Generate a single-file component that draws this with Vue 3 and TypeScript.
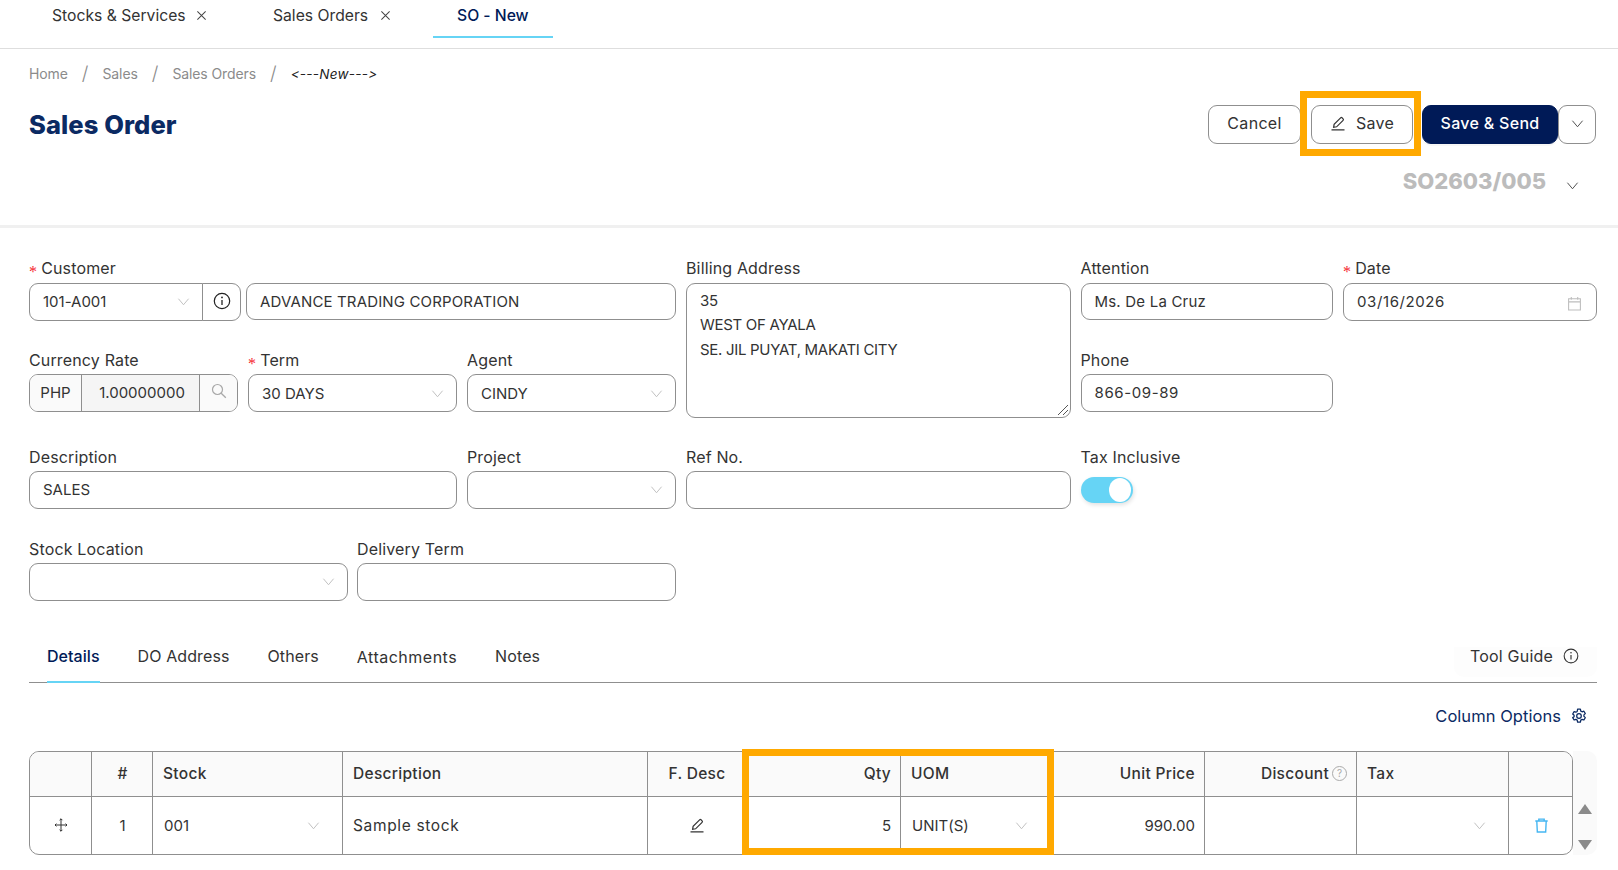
<script setup lang="ts">
interface Crumb { label: string }
const crumbs: Crumb[] = [{ label: 'Home' }, { label: 'Sales' }, { label: 'Sales Orders' }]
const sections: string[] = ['Details', 'DO Address', 'Others', 'Attachments', 'Notes']
const widths: number[] = [62, 61, 190, 305, 98, 155, 150, 154, 152, 152, 63]
</script>

<template>
  <div class="page">
    <svg class="sprite" width="0" height="0" aria-hidden="true">
      <symbol id="chev" viewBox="0 0 14 14"><path d="M1.5 4 7 10.5 12.5 4" fill="none" stroke="currentColor" stroke-width="1" /></symbol>
      <symbol id="cross" viewBox="0 0 12 12"><path d="M1.5 1.5l9 9M10.5 1.5l-9 9" fill="none" stroke="currentColor" stroke-width="1.1" /></symbol>
      <symbol id="edit" viewBox="0 0 16 16"><path d="M1.5 14.8h13M3.6 12.3l.5-3L10.6 2.8a1 1 0 0 1 1.4 0l1.1 1.1a1 1 0 0 1 0 1.4L6.6 11.8z" fill="none" stroke="currentColor" stroke-width="1.2" /></symbol>
      <symbol id="info" viewBox="0 0 18 18"><circle cx="9" cy="9" r="7.7" fill="none" stroke="currentColor" stroke-width="1.2" /><path d="M9 8v5" stroke="currentColor" stroke-width="1.3" /><circle cx="9" cy="5.4" r=".9" fill="currentColor" /></symbol>
    </svg>

    <nav class="topnav">
      <div class="toptab"><span>Stocks &amp; Services</span><svg class="x"><use href="#cross" /></svg></div>
      <div class="toptab two"><span>Sales Orders</span><svg class="x"><use href="#cross" /></svg></div>
      <div class="toptab active"><span>SO - New</span></div>
    </nav>

    <header class="head">
      <div class="crumbs">
        <template v-for="c in crumbs" :key="c.label">
          <span class="crumb">{{ c.label }}</span><span class="slash">/</span>
        </template>
        <span class="crumb-now">&lt;---New---&gt;</span>
      </div>
      <div class="titlebar">
        <h1>Sales Order</h1>
        <div class="actions">
          <button class="btn cancel">Cancel</button>
          <button class="btn save"><svg class="ed"><use href="#edit" /></svg>Save</button>
          <button class="btn send">Save &amp; Send</button>
          <button class="btn more"><svg class="c13"><use href="#chev" /></svg></button>
        </div>
      </div>
      <div class="docno"><b>SO2603/005</b><svg class="c13 dark"><use href="#chev" /></svg></div>
    </header>

    <section class="form">
      <div class="left">
        <div class="field">
          <label><i>*</i>Customer</label>
          <div class="cust">
            <div class="ctl sel join-r w174">101-A001<svg class="c13"><use href="#chev" /></svg></div>
            <div class="ctl infobtn"><svg class="i18"><use href="#info" /></svg></div>
            <div class="ctl in grow caps">ADVANCE TRADING CORPORATION</div>
          </div>
        </div>
      </div>
      <div class="field billing">
        <label>Billing Address</label>
        <div class="ctl area">35<br />WEST OF AYALA<br />SE. JIL PUYAT, MAKATI CITY
          <svg class="grip" viewBox="0 0 12 12"><path d="M11 1 1 11M11 6l-5 5" stroke="#555" stroke-width="1" fill="none" /></svg>
        </div>
      </div>
      <div class="field">
        <label>Attention</label>
        <div class="ctl in wide">Ms. De La Cruz</div>
      </div>
      <div class="field">
        <label><i>*</i>Date</label>
        <div class="ctl sel"><span class="digits">03/16/2026</span>
          <svg class="cal" viewBox="0 0 14 14"><path d="M1.5 2.5h11v10.5h-11zM1.5 5.5h11M4 1v2.5M10 1v2.5" fill="none" stroke="#bdbdbd" stroke-width="1" /></svg>
        </div>
      </div>

      <div class="left r3">
        <div class="field">
          <label>Currency Rate</label>
          <div class="curr">
            <span class="php">PHP</span><span class="rate">1.00000000</span>
            <span class="find"><svg viewBox="0 0 16 16"><circle cx="6.5" cy="6.5" r="5" fill="none" stroke="#a8a8a8" stroke-width="1.2" /><path d="m10.2 10.2 4.6 4.6" stroke="#a8a8a8" stroke-width="1.3" /></svg></span>
          </div>
        </div>
        <div class="field">
          <label><i>*</i>Term</label>
          <div class="ctl sel">30 DAYS<svg class="c13"><use href="#chev" /></svg></div>
        </div>
        <div class="field">
          <label>Agent</label>
          <div class="ctl sel">CINDY<svg class="c13"><use href="#chev" /></svg></div>
        </div>
      </div>
      <div class="field">
        <label>Phone</label>
        <div class="ctl in digits">866-09-89</div>
      </div>
      <div></div>

      <div class="left r2">
        <div class="field">
          <label>Description</label>
          <div class="ctl in">SALES</div>
        </div>
        <div class="field">
          <label>Project</label>
          <div class="ctl in sel37"><svg class="c13"><use href="#chev" /></svg></div>
        </div>
      </div>
      <div class="field">
        <label>Ref No.</label>
        <div class="ctl in"></div>
      </div>
      <div class="field">
        <label>Tax Inclusive</label>
        <div class="toggle"><span class="knob"></span></div>
      </div>
      <div></div>

      <div class="left r2b">
        <div class="field">
          <label>Stock Location</label>
          <div class="ctl in sel37"><svg class="c13"><use href="#chev" /></svg></div>
        </div>
        <div class="field">
          <label>Delivery Term</label>
          <div class="ctl in"></div>
        </div>
      </div>
    </section>

    <section class="sections">
      <div class="seclist">
        <span v-for="(s, i) in sections" :key="s" class="sec" :class="{ on: i === 0, low: s === 'Attachments' }">{{ s }}</span>
      </div>
      <div class="guide">Tool Guide<svg class="i16"><use href="#info" /></svg></div>
    </section>

    <div class="colopts">Column Options
      <svg class="gear" viewBox="0 0 16 16"><path d="M6.6 1.2h2.8l.4 1.9 1.3.7 1.8-.6 1.4 2.4-1.4 1.3v1.4l1.4 1.3-1.4 2.4-1.8-.6-1.3.7-.4 1.9H6.6l-.4-1.9-1.3-.7-1.8.6-1.4-2.4L3.100 8.700V7.300L1.700 6l1.400-2.400 1.800.6 1.300-.7z" fill="none" stroke="currentColor" stroke-width="1.25" stroke-linejoin="round" /><circle cx="8" cy="8" r="2.300" fill="none" stroke="currentColor" stroke-width="1.25" /></svg>
    </div>

    <section class="tablewrap">
      <table class="grid">
        <colgroup><col v-for="(w, i) in widths" :key="i" :style="{ width: w + 'px' }" /></colgroup>
        <thead>
          <tr>
            <th></th><th class="ctr">#</th><th>Stock</th><th>Description</th><th class="ctr">F. Desc</th>
            <th class="rt">Qty</th><th>UOM</th><th class="rt">Unit Price</th>
            <th class="rt disc">Discount<span class="q">?</span></th><th>Tax</th><th></th>
          </tr>
        </thead>
        <tbody>
          <tr>
            <td class="ctr"><svg class="drag" viewBox="0 0 14 14"><path d="M7 .8v12.400M1 7h12M5.600 2.200 7 .8l1.400 1.400M5.600 11.800 7 13.200l1.400-1.400M2.400 5.600 1 7l1.400 1.400M11.600 5.600 13 7l-1.400 1.400" fill="none" stroke="#333" stroke-width="1" /></svg></td>
            <td class="ctr">1</td>
            <td><div class="cellsel">001<svg class="c13"><use href="#chev" /></svg></div></td>
            <td class="sample">Sample stock</td>
            <td class="ctr"><svg class="ed"><use href="#edit" /></svg></td>
            <td class="rt">5</td>
            <td><div class="cellsel">UNIT(S)<svg class="c13"><use href="#chev" /></svg></div></td>
            <td class="rt">990.00</td>
            <td></td>
            <td><div class="cellsel"><span></span><svg class="c13"><use href="#chev" /></svg></div></td>
            <td class="ctr"><svg class="trash" viewBox="0 0 14 14"><path d="M1.200 2.800h11.600M4.500 2.800V1h5v1.800M2.600 2.800l.5 10.200h7.800l.5-10.200" fill="none" stroke="#45b6f2" stroke-width="1.300" /></svg></td>
          </tr>
        </tbody>
      </table>
      <div class="scroller">
        <span class="up"></span>
        <span class="dn"></span>
      </div>
    </section>

    <div class="mark mark-save"></div>
    <div class="mark mark-qty"></div>
  </div>
</template>

<style>
html, body { margin: 0; background: #fff; overflow: hidden; }
</style>

<style scoped>
.page {
  position: relative;
  width: 1618px;
  height: 870px;
  overflow: hidden;
  background: #fff;
  color: #333;
  font-family: Inter, "Open Sans", sans-serif;
  font-size: 15px;
  font-variant-ligatures: none;
  font-feature-settings: "calt" 0, "liga" 0;
}
.sprite { position: absolute; }
svg { display: block; flex: none; }

.topnav {
  display: flex;
  gap: 18px;
  height: 48px;
  padding-left: 28px;
  border-bottom: 1px solid #dedede;
}
.toptab {
  display: flex;
  align-items: flex-start;
  gap: 10px;
  width: 155px;
  height: 30px;
  padding: 6px 24px 0;
  line-height: 20px;
  font-size: 15.7px;
  white-space: nowrap;
}
.toptab.two { width: 118px; }
.toptab.active {
  width: 72px;
  color: #001a57;
  border-bottom: 2px solid #66d4f5;
  font-weight: 500;
}
.x { width: 11px; height: 11px; margin-top: 4px; color: #444; margin-left: auto; }

.head { position: relative; height: 176px; border-bottom: 3px solid #f0f0f0; padding: 0 21px 0 29px; }
.crumbs { display: flex; align-items: center; height: 26px; padding-top: 12px; font-size: 14px; line-height: 26px; }
.crumb { color: #8b8b8b; letter-spacing: -.1px; }
.slash { color: #8b8b8b; font-size: 19px; margin: 0 14px; font-weight: 300; }
.crumb-now { font-style: italic; color: #222; margin-left: 0; font-size: 13.5px; letter-spacing: .25px; }
.titlebar { display: flex; justify-content: space-between; align-items: center; height: 39px; margin-top: 18px; }
h1 { margin: 0; font-size: 25.5px; font-weight: 800; color: #0b2a63; letter-spacing: .1px; }
.actions { display: flex; align-items: center; }
.btn {
  display: flex;
  align-items: center;
  justify-content: center;
  height: 39px;
  padding: 0 0 3px;
  border: 1px solid #8f8f8f;
  border-radius: 9px;
  background: #fff;
  color: #333;
  font: inherit;
  font-size: 16px;
  letter-spacing: .3px;
}
.cancel { width: 93px; margin-right: 10px; }
.save { width: 102px; gap: 10px; margin-right: 9px; }
.send { width: 136px; background: #001a57; border-color: #001a57; color: #fff; font-weight: 500; box-shadow: 0 2px 0 rgba(0,0,0,.03); }
.more { width: 38px; margin-right: 1px; }
.ed { width: 16px; height: 16px; }
.c13 { width: 13px; height: 13px; color: #bcbcbc; }
.more .c13 { color: #444; }
.dark { color: #444; }
.docno { display: flex; align-items: center; justify-content: flex-end; gap: 20px; margin-top: 22px; padding-right: 18px; }
.docno b { font-size: 22px; color: #bcbcbc; font-weight: 800; line-height: 30px; }
.docno .c13 { margin-top: 8px; }

.form {
  display: grid;
  grid-template-columns: 647px 384.5px 252.5px 254px;
  grid-template-rows: 61.5px 67px auto auto;
  column-gap: 10px;
  row-gap: 30px;
  padding: 31px 0 0 29px;
  align-items: start;
}
.left { display: flex; flex-direction: column; }
.r3 { display: grid; grid-template-columns: 209px 209px 209px; column-gap: 10px; }
.r2 { display: grid; grid-template-columns: 428px 209px; column-gap: 10px; }
.r2b { display: grid; grid-template-columns: 319px 319px; column-gap: 9px; margin-top: 1px; }
.billing { grid-row: span 2; }
.field { display: flex; flex-direction: column; }
label { display: block; height: 23.5px; line-height: 18px; white-space: nowrap; font-size: 16px; letter-spacing: .15px; }
label i { color: #f5222d; font-style: normal; margin-right: 4px; font-family: "Liberation Serif", serif; font-size: 16px; position: relative; top: 3px; }
.ctl {
  position: relative;
  display: flex;
  align-items: center;
  box-sizing: border-box;
  border: 1px solid #8f8f8f;
  border-radius: 9px;
  background: #fff;
  padding: 0 12px 0 13px;
  white-space: nowrap;
}
.in { height: 37.6px; }
.sel { height: 38px; justify-content: space-between; }
.sel37 { justify-content: flex-end; }
.wide { letter-spacing: .2px; }
.digits { letter-spacing: .6px; }
.caps { letter-spacing: .15px; }
.cust { display: flex; }
.w174 { width: 174px; border-radius: 9px 0 0 9px; }
.infobtn { width: 39px; height: 38px; margin-left: -1px; padding: 0; justify-content: center; border-radius: 0 9px 9px 0; color: #222; }
.i18 { width: 18px; height: 18px; margin-top: -2px; }
.grow { flex: 1; margin-left: 5px; }
.area { display: block; height: 135px; padding: 5px 13px; line-height: 24.5px; white-space: normal; letter-spacing: -.3px; }
.grip { position: absolute; right: 1px; bottom: 1px; width: 12px; height: 12px; }
.cal { width: 15px; height: 15px; margin: 3px 2px 0 0; }
.curr { display: flex; height: 37.6px; box-sizing: border-box; border: 1px solid #8f8f8f; border-radius: 9px; overflow: hidden; }
.php { width: 51px; display: flex; align-items: center; justify-content: center; background: #fafafa; border-right: 1px solid #8f8f8f; }
.rate { width: 118px; display: flex; align-items: center; justify-content: center; background: #f5f5f5; border-right: 1px solid #8f8f8f; padding-left: 3px; box-sizing: border-box; }
.find { flex: 1; display: flex; align-items: center; justify-content: center; background: #fafafa; }
.find svg { width: 16px; height: 16px; margin-top: -3px; }
.toggle { position: relative; width: 52px; height: 26px; border-radius: 13px; background: #66d4f5; box-shadow: 1px 2px 4px rgba(0,0,0,.12); margin-top: 6px; }
.knob { position: absolute; right: 2px; top: 1px; width: 22px; height: 24px; border-radius: 50%; background: #fff; }

.sections {
  display: flex;
  justify-content: space-between;
  margin: 0 21px 0 29px;
  height: 82px;
  box-sizing: border-box;
  border-bottom: 1px solid #8f8f8f;
  align-items: flex-end;
}
.seclist { display: flex; gap: 38px; padding-left: 18px; }
.sec { display: block; height: 36px; line-height: 18px; margin-bottom: -1px; box-sizing: border-box; font-size: 16px; letter-spacing: .1px; }
.sec.on { color: #001a57; font-weight: 500; border-bottom: 2px solid #66d4f5; letter-spacing: .05px; }
.sec.low { padding-top: 1px; letter-spacing: .5px; }
.guide { display: flex; align-items: flex-start; justify-content: flex-end; gap: 10px; width: 143px; box-sizing: border-box; height: 30px; line-height: 18px; margin-bottom: 5px; padding-right: 18px; font-size: 16px; letter-spacing: .2px; background: #fdfdfd; border-radius: 0 0 10px 10px; white-space: nowrap; }
.i16 { width: 16px; height: 16px; margin-top: 1px; }
.colopts { display: flex; justify-content: flex-end; align-items: center; gap: 10px; color: #0b2a63; height: 22px; margin: 22px 31px 0 0; font-size: 16.5px; letter-spacing: .05px; }
.gear { width: 16px; height: 16px; }

.tablewrap { display: flex; margin: 24px 21px 0 29px; }
.grid {
  width: 1544px;
  height: 104px;
  table-layout: fixed;
  border-collapse: separate;
  border-spacing: 0;
  border: 1px solid #8f8f8f;
  border-radius: 10px;
  box-sizing: border-box;
}
th, td { border-right: 1px solid #8f8f8f; padding: 0 9px 0 10px; text-align: left; white-space: nowrap; font-weight: 400; }
th:last-child, td:last-child { border-right: 0; }
th { height: 44px; background: #fafafa; border-bottom: 1px solid #8f8f8f; font-weight: 500; letter-spacing: .3px; font-size: 15.5px; }
th:first-child { border-top-left-radius: 9px; }
th:last-child { border-top-right-radius: 9px; }
td { height: 57px; }
.sample { font-size: 15.5px; letter-spacing: .65px; }
.ctr { text-align: center; }
.ctr svg { margin: 0 auto; }
.rt { text-align: right; }
th.disc { padding-right: 27px; position: relative; }
.q { position: absolute; right: 9px; top: 14px; width: 15px; height: 15px; box-sizing: border-box; border: 1px solid #aaa; border-radius: 50%; color: #aaa; font-size: 10px; line-height: 13px; text-align: center; font-weight: 400; letter-spacing: 0; }
.cellsel { display: flex; justify-content: space-between; align-items: center; padding: 0 13px 0 1px; }
.drag { width: 14px; height: 14px; }
.trash { width: 15px; height: 15px; }
.scroller { width: 24px; background: #fafafa; border-radius: 0 10px 10px 0; position: relative; display: flex; flex-direction: column; justify-content: flex-end; align-items: center; gap: 26px; padding-bottom: 5px; box-sizing: border-box; }
.up, .dn { width: 0; height: 0; border-left: 7px solid transparent; border-right: 7px solid transparent; }
.up { border-bottom: 10px solid #8a8a8a; }
.dn { border-top: 10px solid #8a8a8a; }

.mark { position: absolute; box-sizing: border-box; border: 7px solid #ffa900; pointer-events: none; }
.mark-save { left: 1300px; top: 91px; width: 121px; height: 65px; }
.mark-qty { left: 742px; top: 749px; width: 312px; height: 106px; }
</style>
